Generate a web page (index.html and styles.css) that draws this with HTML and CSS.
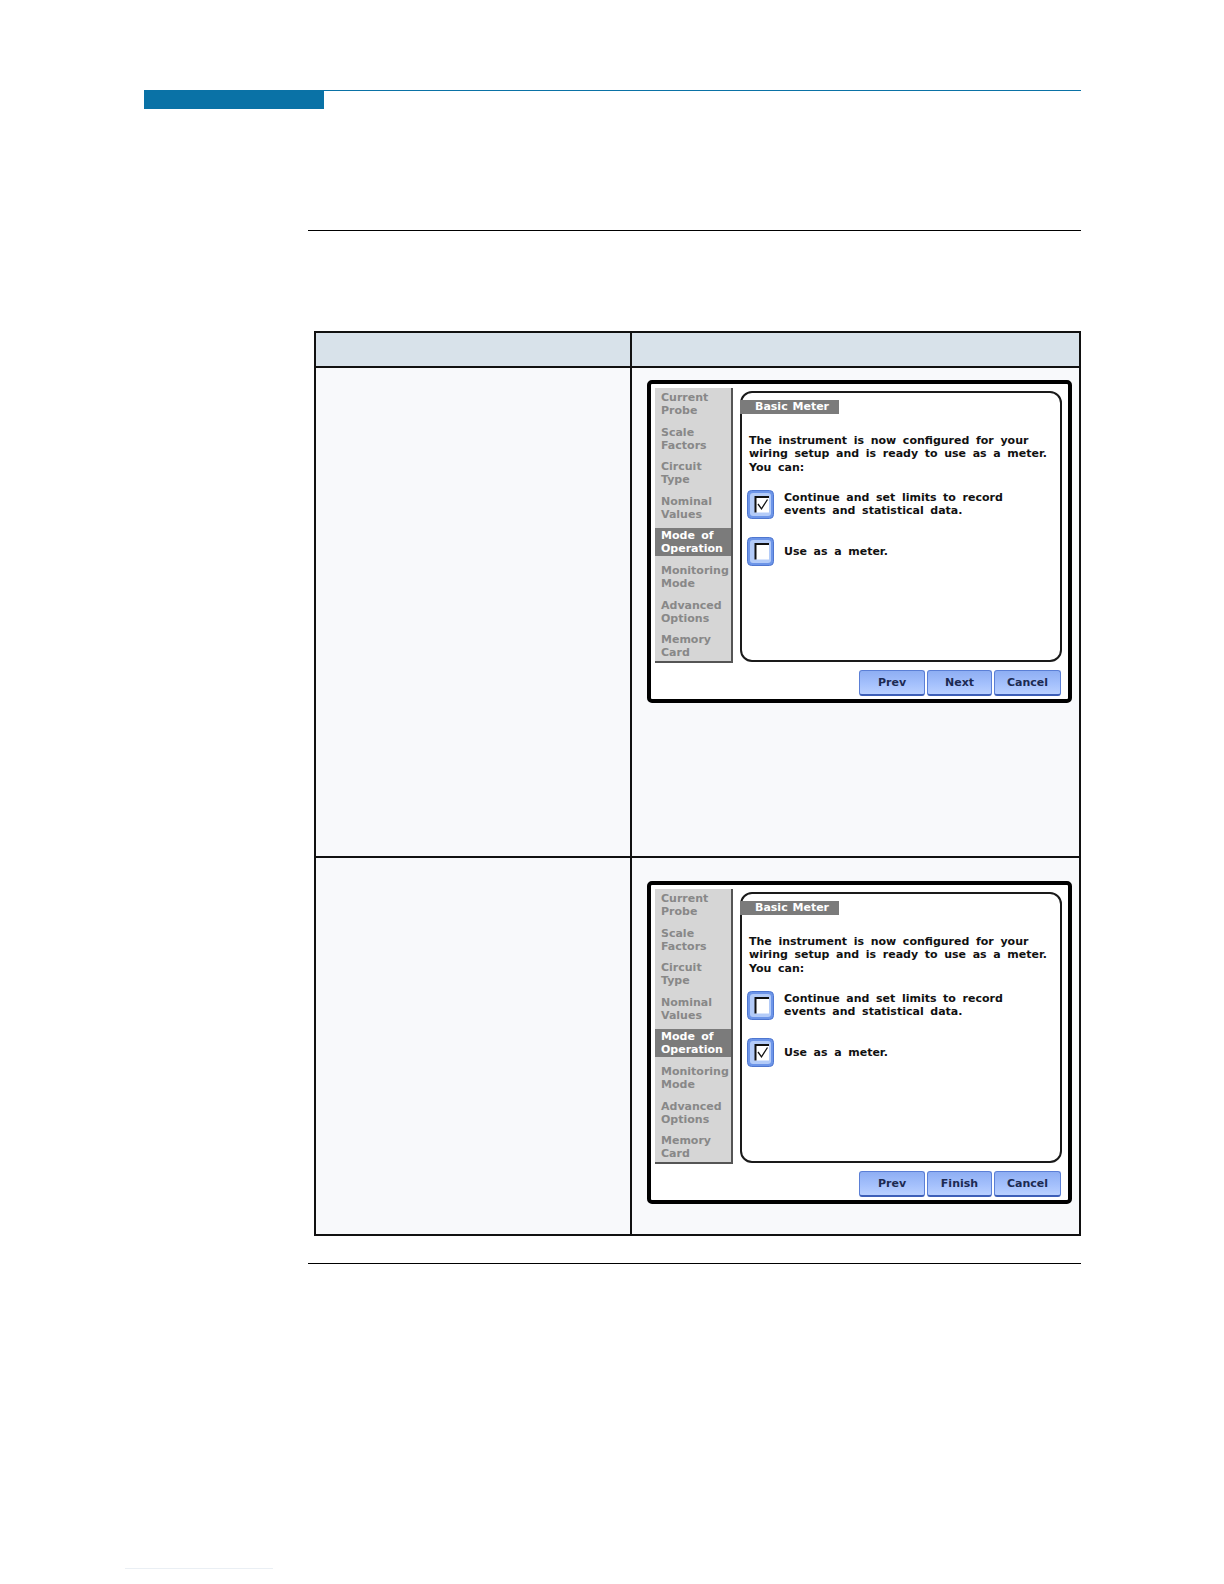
FILE: index.html
```html
<!DOCTYPE html>
<html>
<head>
<meta charset="utf-8">
<link rel="stylesheet" href="styles.css">
</head>
<body>
<div class="page">
  <div class="topbar"><div class="tab-block"></div><div class="tab-rule"></div></div>
  <div class="content">
    <div class="rule rule-top"></div>
    <div class="grid">
      <div class="cell head"></div>
      <div class="cell head"></div>
      <div class="cell row1"></div>
      <div class="cell row1 shot">
        <div class="frame">
          <div class="upper">
            <div class="sidebar">
              <div class="item">Current<br>Probe</div>
              <div class="item">Scale<br>Factors</div>
              <div class="item">Circuit<br>Type</div>
              <div class="item">Nominal<br>Values</div>
              <div class="item sel">Mode of<br>Operation</div>
              <div class="item">Monitoring<br>Mode</div>
              <div class="item">Advanced<br>Options</div>
              <div class="item">Memory<br>Card</div>
            </div>
            <div class="panel">
              <div class="ptab">Basic Meter</div>
              <p class="ptext">The instrument is now configured for your<br>wiring setup and is ready to use as a meter.<br>You can:</p>
              <div class="opt opt1">
                <svg class="cb" width="27" height="29" viewBox="0 0 27 29"><rect x="0.5" y="0.5" width="26" height="28" rx="4" fill="#6d95e8" stroke="#4f77d0"/><rect x="3" y="3" width="21" height="23" rx="3" fill="#b3cbf8"/><rect x="8" y="6.5" width="14" height="16" fill="#fff"/><path d="M8.5 22.5 V7 H22" stroke="#111" stroke-width="2" fill="none"/><path d="M11 14 L14.5 18.8 L20.5 9.5" stroke="#111" stroke-width="1.3" fill="none"/></svg>
                <div class="olabel">Continue and set limits to record<br>events and statistical data.</div>
              </div>
              <div class="opt opt2">
                <svg class="cb" width="27" height="29" viewBox="0 0 27 29"><rect x="0.5" y="0.5" width="26" height="28" rx="4" fill="#6d95e8" stroke="#4f77d0"/><rect x="3" y="3" width="21" height="23" rx="3" fill="#b3cbf8"/><rect x="8" y="6.5" width="14" height="16" fill="#fff"/><path d="M8.5 22.5 V7 H22" stroke="#111" stroke-width="2" fill="none"/></svg>
                <div class="olabel">Use as a meter.</div>
              </div>
            </div>
          </div>
          <div class="buttons">
            <div class="btn b-prev">Prev</div>
            <div class="btn b-next">Next</div>
            <div class="btn b-cancel">Cancel</div>
          </div>
        </div>
      </div>
      <div class="cell row2"></div>
      <div class="cell row2 shot">
        <div class="frame">
          <div class="upper">
            <div class="sidebar">
              <div class="item">Current<br>Probe</div>
              <div class="item">Scale<br>Factors</div>
              <div class="item">Circuit<br>Type</div>
              <div class="item">Nominal<br>Values</div>
              <div class="item sel">Mode of<br>Operation</div>
              <div class="item">Monitoring<br>Mode</div>
              <div class="item">Advanced<br>Options</div>
              <div class="item">Memory<br>Card</div>
            </div>
            <div class="panel">
              <div class="ptab">Basic Meter</div>
              <p class="ptext">The instrument is now configured for your<br>wiring setup and is ready to use as a meter.<br>You can:</p>
              <div class="opt opt1">
                <svg class="cb" width="27" height="29" viewBox="0 0 27 29"><rect x="0.5" y="0.5" width="26" height="28" rx="4" fill="#6d95e8" stroke="#4f77d0"/><rect x="3" y="3" width="21" height="23" rx="3" fill="#b3cbf8"/><rect x="8" y="6.5" width="14" height="16" fill="#fff"/><path d="M8.5 22.5 V7 H22" stroke="#111" stroke-width="2" fill="none"/></svg>
                <div class="olabel">Continue and set limits to record<br>events and statistical data.</div>
              </div>
              <div class="opt opt2">
                <svg class="cb" width="27" height="29" viewBox="0 0 27 29"><rect x="0.5" y="0.5" width="26" height="28" rx="4" fill="#6d95e8" stroke="#4f77d0"/><rect x="3" y="3" width="21" height="23" rx="3" fill="#b3cbf8"/><rect x="8" y="6.5" width="14" height="16" fill="#fff"/><path d="M8.5 22.5 V7 H22" stroke="#111" stroke-width="2" fill="none"/><path d="M11 14 L14.5 18.8 L20.5 9.5" stroke="#111" stroke-width="1.3" fill="none"/></svg>
                <div class="olabel">Use as a meter.</div>
              </div>
            </div>
          </div>
          <div class="buttons">
            <div class="btn b-prev">Prev</div>
            <div class="btn b-next">Finish</div>
            <div class="btn b-cancel">Cancel</div>
          </div>
        </div>
      </div>
    </div>
    <div class="rule rule-bottom"></div>
  </div>
  <div class="footer-line"></div>
</div>
</body>
</html>
```

FILE: styles.css
```css
* { box-sizing: border-box; }
body {
  margin: 0;
  background: #ffffff;
  font-family: "DejaVu Sans", "Liberation Sans", sans-serif;
}
.page { width: 1224px; min-height: 1584px; }

.topbar {
  display: flex;
  align-items: flex-start;
  margin-left: 144px;
  width: 937px;
  padding-top: 90px;
}
.tab-block { width: 180px; height: 19px; background: #0a72a6; }
.tab-rule { flex: 1; height: 1px; background: #0a72a6; }

.content { margin-left: 308px; width: 773px; }
.rule { height: 1px; background: #000; }
.rule-top { margin-top: 121px; }
.rule-bottom { margin-top: 27px; }

.grid {
  margin-top: 100px;
  margin-left: 6px;
  width: 767px;
  display: grid;
  grid-template-columns: 316px 1fr;
  border-left: 2px solid #111;
  border-top: 2px solid #111;
}
.cell {
  border-right: 2px solid #111;
  border-bottom: 2px solid #111;
  background: #f8f9fb;
}
.cell.head { height: 35px; background: #d8e2ea; }
.cell.row1 { height: 490px; }
.cell.row2 { height: 378px; }
.cell.shot { padding-left: 15px; }
.cell.row1.shot { padding-top: 12px; }
.cell.row2.shot { padding-top: 23px; }

.frame {
  width: 425px;
  height: 323px;
  border: 4px solid #000;
  border-radius: 5px;
  background: #fff;
  padding: 4px 6px 3px 4px;
  font-weight: bold;
  font-size: 11px;
}
.upper { display: flex; height: 275px; }

.sidebar {
  width: 78px;
  height: 275px;
  background: #d6d6d6;
  border-right: 2px solid #555;
  border-bottom: 2px solid #555;
  padding-top: 2px;
}
.item {
  height: 28px;
  padding: 1px 0 1px 6px;
  margin-bottom: 6.6px;
  line-height: 13px;
  color: #888888;
  white-space: nowrap;
  word-spacing: 2.5px;
}
.item.sel { background: #7b7b7b; color: #ffffff; }

.panel {
  width: 322px;
  height: 271px;
  margin-left: 7px;
  margin-top: 3px;
  border: 2px solid #1a1a1a;
  border-radius: 12px;
  padding: 7px 0 0 7px;
}
.ptab {
  width: 99px;
  height: 14px;
  margin-left: -9px;
  background: #7b7b7b;
  color: #fff;
  line-height: 14px;
  padding-left: 15px;
  white-space: nowrap;
  word-spacing: 1px;
}
.ptext {
  margin: 20px 0 0 0;
  line-height: 13.3px;
  word-spacing: 2.8px;
  color: #111;
  white-space: nowrap;
}
.opt { display: flex; align-items: center; margin-left: -2px; }
.opt1 { margin-top: 16px; }
.opt2 { margin-top: 18px; }
.cb { display: block; flex: none; }
.olabel {
  margin-left: 10px;
  line-height: 13.3px;
  word-spacing: 2.8px;
  color: #111;
  white-space: nowrap;
}

.buttons {
  display: flex;
  justify-content: flex-end;
  gap: 2px;
  margin-top: 7px;
  padding-right: 1px;
}
.btn {
  height: 26px;
  border: 1px solid #5b7fd6;
  border-bottom: 2px solid #3d5fb8;
  border-radius: 3px;
  background: linear-gradient(#8eaef3, #a4c0fc 55%, #b9d0ff);
  color: #1c2a52;
  text-align: center;
  line-height: 24px;
}
.b-prev { width: 66px; }
.b-next { width: 65px; }
.b-cancel { width: 67px; }

.footer-line {
  margin-top: 304px;
  margin-left: 125px;
  width: 148px;
  height: 1px;
  background: #eaeff4;
}
```
